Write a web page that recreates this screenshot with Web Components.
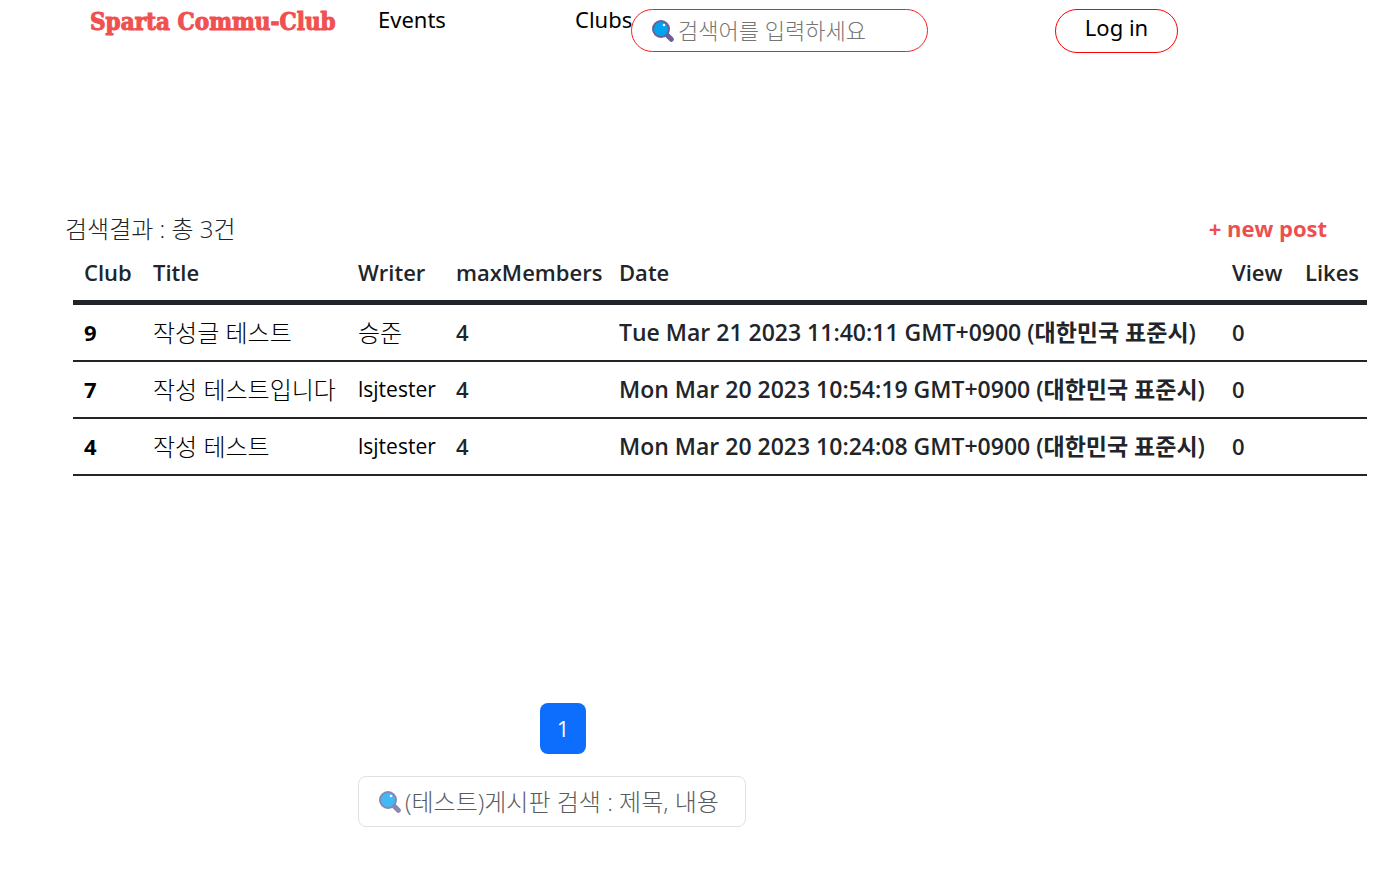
<!DOCTYPE html>
<html lang="ko">
<head>
<meta charset="utf-8">
<title>Sparta Commu-Club</title>
<style>
  body { margin: 0; background: #fff; color: #212529; font: 22px/33px "Open Sans", "Noto Sans CJK KR", sans-serif; }
</style>
</head>
<body>
<club-page></club-page>

<template id="page">
  <style>
    :host { display: block; }
    main { padding: 159px 28px 0 65px; }
    .bar { display: flex; justify-content: space-between; align-items: center; padding-right: 40px; }
    .bar a { color: #eb5050; font-weight: 700; text-decoration: none; }
    .bar p { margin: 0; font-size: 24px; font-weight: 300; }
    post-table { margin: 0 0 0 8px; }
    footer { width: 388px; max-width: 100%; margin: 227px 0 0 293px; display: grid; gap: 22px; }
    page-list { margin-left: 182px; }
  </style>
  <club-nav></club-nav>
  <main>
    <div class="bar"><p>검색결과 : 총 3건</p><a href="#new">+ new post</a></div>
    <post-table></post-table>
    <footer>
      <page-list></page-list>
      <search-box label="게시판 검색" placeholder="(테스트)게시판 검색 : 제목, 내용"></search-box>
    </footer>
  </main>
</template>

<template id="nav">
  <style>
    :host { display: block; }
    nav { display: grid; grid-template-columns: 288fr 197fr minmax(0, 56fr) 424fr 340fr; align-items: start; padding: 9px 0 0 90px; color: #000; }
    a { color: inherit; text-decoration: none; font: 400 22px/20px "Noto Sans", sans-serif; }
    .logo { color: #f05050; font: bold 24px/26px "DejaVu Serif Condensed", "DejaVu Serif", serif; -webkit-text-stroke: 1px #f05050; white-space: nowrap; }
    search-box { width: 70%; }
    button { justify-self: start; width: 123px; height: 44px; padding: 0 0 8px; background: #fff; color: #000; border: 1px solid #f00; border-radius: 22px; font: 400 22px/20px "Noto Sans", sans-serif; }
  </style>
  <nav>
    <a class="logo" href="#home">Sparta Commu-Club</a>
    <a href="#events">Events</a>
    <a href="#clubs">Clubs</a>
    <search-box round label="검색" placeholder="검색어를 입력하세요"></search-box>
    <button type="button">Log in</button>
  </nav>
</template>

<template id="search">
  <style>
    :host { display: block; --line: #dee2e6; --ink: #595c5f; --lens: #40baf4; --rim: #8886b4; }
    :host([round]) { --line: #f52020; --ink: #757575; --lens: #00a4ef; --rim: #685f9c; }
    label { box-sizing: border-box; display: flex; align-items: center; height: 51px; padding: 0 18px 0 20px; border: 1px solid var(--line); border-radius: 8px; background: #fff; }
    :host([round]) label { height: 43px; border-radius: 22px; }
    svg { flex: none; width: 22px; height: 22px; margin-right: 4px; }
    input { flex: 1; min-width: 0; height: 33px; padding: 0; border: 0; outline: 0; background: none; color: #212529; font: inherit; font-size: 24px; font-weight: 300; }
    :host([round]) input { font-size: 22px; }
    input::placeholder { color: var(--ink); opacity: 1; }
  </style>
  <label>
    <svg viewBox="0 0 22 22" aria-hidden="true">
      <path d="M14 14l5.300 5.300" stroke="var(--rim)" stroke-width="5" stroke-linecap="round"/>
      <circle cx="9" cy="9" r="8" fill="var(--lens)" stroke="var(--rim)" stroke-width="2"/>
      <circle cx="12" cy="5" r="1.300" fill="#fff"/>
    </svg>
    <input type="text">
  </label>
</template>

<template id="table">
  <style>
    :host { display: block; }
    table { width: 100%; table-layout: fixed; border-collapse: separate; border-spacing: 0; }
    th, td { padding: 11px; text-align: left; font-weight: 600; border-bottom: 2px solid #212529; white-space: nowrap; }
    thead th { border-bottom-width: 5px; }
    tbody th { color: #000; font-weight: 700; }
    .name { color: #000; font-size: 24px; font-weight: 300; }
    .latin { color: #000; font-size: 21px; font-weight: 400; }
    .when { font-size: 23px; }
    a { color: inherit; text-decoration: none; }
    .club { width: 47px; } .title { width: 183px; } .writer { width: 76px; } .max { width: 141px; } .view, .likes { width: 51px; }
  </style>
  <table>
    <thead><tr>
      <th class="club" scope="col">Club</th><th class="title" scope="col">Title</th><th class="writer" scope="col">Writer</th>
      <th class="max" scope="col">maxMembers</th><th scope="col">Date</th><th class="view" scope="col">View</th><th class="likes" scope="col">Likes</th>
    </tr></thead>
    <tbody></tbody>
  </table>
</template>

<template id="pages">
  <style>
    :host { display: block; }
    button { display: block; width: 46px; height: 51px; padding: 0; border: 0; border-radius: 8px; background: #0d6efd; color: #fff; font: inherit; }
  </style>
  <button type="button" aria-current="page">1</button>
</template>

<script>
  class TemplateElement extends HTMLElement {
    constructor() {
      super();
      const source = document.getElementById(this.constructor.template);
      this.attachShadow({ mode: "open" }).append(source.content.cloneNode(true));
    }
  }

  class SearchBox extends TemplateElement {
    static template = "search";
    connectedCallback() {
      const input = this.shadowRoot.querySelector("input");
      input.placeholder = this.getAttribute("placeholder");
      input.setAttribute("aria-label", this.getAttribute("label"));
    }
  }

  const posts = [
    { id: 9, title: "작성글 테스트", writer: "승준", max: 4, date: "Tue Mar 21 2023 11:40:11 GMT+0900 (대한민국 표준시)", views: 0 },
    { id: 7, title: "작성 테스트입니다", writer: "lsjtester", max: 4, date: "Mon Mar 20 2023 10:54:19 GMT+0900 (대한민국 표준시)", views: 0 },
    { id: 4, title: "작성 테스트", writer: "lsjtester", max: 4, date: "Mon Mar 20 2023 10:24:08 GMT+0900 (대한민국 표준시)", views: 0 }
  ];

  // Hangul names are set larger and lighter than Latin ones.
  const script = text => /^[\x20-\x7e]+$/.test(text) ? "latin" : "name";

  class PostTable extends TemplateElement {
    static template = "table";
    connectedCallback() {
      this.shadowRoot.querySelector("tbody").innerHTML = posts.map(p => `
        <tr><th scope="row">${p.id}</th><td class="${script(p.title)}"><a href="#post-${p.id}">${p.title}</a></td>
        <td class="${script(p.writer)}">${p.writer}</td><td>${p.max}</td><td class="when">${p.date}</td><td>${p.views}</td><td></td></tr>`).join("");
    }
  }

  class PageList extends TemplateElement { static template = "pages"; }
  class ClubNav extends TemplateElement { static template = "nav"; }
  class ClubPage extends TemplateElement { static template = "page"; }

  customElements.define("search-box", SearchBox);
  customElements.define("post-table", PostTable);
  customElements.define("page-list", PageList);
  customElements.define("club-nav", ClubNav);
  customElements.define("club-page", ClubPage);
</script>
</body>
</html>
